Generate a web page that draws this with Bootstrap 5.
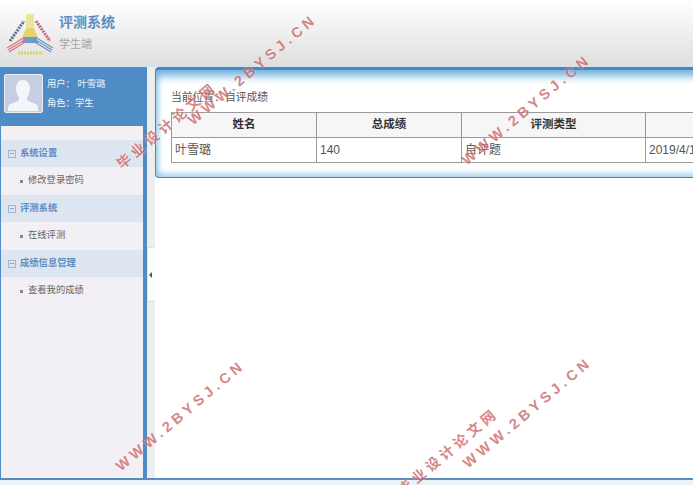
<!DOCTYPE html>
<html lang="zh"><head><meta charset="utf-8">
<link href="https://cdn.jsdelivr.net/npm/bootstrap@5.3.0/dist/css/bootstrap.min.css" rel="stylesheet">
<style>
html,body{height:485px;overflow:hidden}
body{font-family:"Liberation Sans","Noto Sans CJK SC",sans-serif;font-size:10.5px;color:#555;background:#fff;position:relative;width:693px}
.top-head{height:67px;background:linear-gradient(#fff,#dfdfdf);border-bottom:2px solid #cfe3f2;padding-left:3px;gap:2px}
.brand-wrap{margin-bottom:3px}
.brand-title{font-size:14px;font-weight:700;color:#5b8cc2;line-height:18px;margin-top:1px}
.brand-sub{font-size:11px;color:#a5a5a5;margin-top:6px;line-height:14px}
.shell{height:411px}
.side{width:147px;background:#4f8bc4;border-right:4px solid #4f8bc4;flex:none}
.profile{height:59px;padding:7px 0 0 4px;gap:4px;color:#eef4fa}
.avatar{width:39px;height:39px;background:#c5cfe1;border:1.5px solid #e9eef6;border-radius:2px}
.user-lines{line-height:19px;font-size:9.3px;padding-top:1px}
.menu-panel{background:#f2eff5;height:352px;margin-left:1px;padding-top:14px;font-size:9.3px}
.group-row{height:27px;background:#dde5f0;color:#5b8cc2;padding-left:7px;gap:4px;font-weight:700}
.leaf-row{height:28px;padding-left:19px;gap:5px;color:#666}
.leaf-row i{width:3px;height:3px;background:#888;display:block}
.minus{width:8px;height:8px;border:1px solid #9db6d4;position:relative;display:block;flex:none}
.minus::after{content:"";position:absolute;left:1px;right:1px;top:2.5px;height:1px;background:#8aa6c8}
.gutter{width:8px;flex:none;background:#eeeeee;position:relative}
.handle{position:absolute;left:0;top:180px;width:8px;height:55px;background:#fbfbfb;border:1px solid #e2e2e2;border-right:0}
.handle::after{content:"";position:absolute;left:1px;top:24px;border:3px solid transparent;border-right:3px solid #555;border-left:0}
.main-area{flex:1;min-width:0;overflow:hidden}
.result-box{height:111px;border:1px solid #4a86b8;border-top-width:3px;border-right:0;border-radius:4px 0 0 4px;box-shadow:inset 0 9px 9px -3px #6fb1de,inset 0 -6px 7px -3px #9fcde9,inset 5px 0 6px -3px #a9d3ec;padding:20px 0 0 15px;width:560px;background:#fff}
.crumb{font-size:10.8px;line-height:14px;color:#555;margin-bottom:8px;white-space:nowrap}
.grade-table{table-layout:fixed;width:545px;border-collapse:collapse;font-size:12px;margin:0}
.grade-table th,.grade-table td{border:1px solid #9a9a9a;padding:0 3px;height:25px;color:#555;vertical-align:middle}
.grade-table th{background:#f6f6f6;text-align:center;font-weight:700;color:#333;font-size:11.5px}
.foot-strip{height:7px;background:#ebf3fa;border-top:2px solid #5a8dbc}
.mark-text{position:absolute;color:#c9605f;opacity:.75;font-weight:700;white-space:nowrap;transform:rotate(-40deg);transform-origin:left bottom;line-height:16px;pointer-events:none;text-shadow:0 0 2px #fff}
.mark-a{letter-spacing:4px;font-size:14px}
.mark-b{letter-spacing:4px;font-size:14.5px}
</style></head><body>
<header class="top-head d-flex align-items-center">
 <svg width="54" height="54" viewBox="3 0 54 54" class="flex-none">
  <path d="M26 8h8v16h-8z" fill="#ece49a"/>
  <path d="M26 22h8l4 10H22z" fill="#e3d56a"/>
  <path d="M24 31h12l2 6H22z" fill="#6d9bd0"/>
  <g stroke="#d9757f" stroke-width="1.3"><path d="M7 42l18-11M8 44l18-11M9 46l18-11"/></g>
  <g stroke="#6b93bf" stroke-width="1.3"><path d="M53 42L35 31M52 44L34 33M51 46L33 35"/></g>
  <path d="M10 35L24 15" fill="none" stroke="#5f6d8f" stroke-width="3" stroke-dasharray="2 1"/>
  <path d="M36 15L50 35" fill="none" stroke="#c5646f" stroke-width="3" stroke-dasharray="2 1"/>
  <path d="M18 47h25" stroke="#dcd264" stroke-width="3" stroke-dasharray="2 1"/>
 </svg>
 <div class="brand-wrap"><div class="brand-title">评测系统</div><div class="brand-sub">学生端</div></div>
</header>
<div class="shell d-flex">
 <aside class="side">
  <div class="profile d-flex">
   <div class="avatar overflow-hidden"><svg width="36" height="36" viewBox="0 0 36 36"><path d="M18 5c5 0 7 4 7 9 0 4-2 7-3 9v2c2 2 8 3 10 5 1 1 1 4 1 6H3c0-2 0-5 1-6 3-2 8-3 10-5v-2c-1-2-3-5-3-9 0-5 2-9 7-9z" fill="#f4f5f8"/></svg></div>
   <div class="user-lines"><div>用户： 叶雪璐</div><div>角色：学生</div></div>
  </div>
  <nav class="menu-panel">
   <div class="group-row d-flex align-items-center"><span class="minus"></span>系统设置</div>
   <div class="leaf-row d-flex align-items-center"><i></i>修改登录密码</div>
   <div class="group-row d-flex align-items-center"><span class="minus"></span>评测系统</div>
   <div class="leaf-row d-flex align-items-center"><i></i>在线评测</div>
   <div class="group-row d-flex align-items-center"><span class="minus"></span>成绩信息管理</div>
   <div class="leaf-row d-flex align-items-center"><i></i>查看我的成绩</div>
  </nav>
 </aside>
 <div class="gutter"><span class="handle"></span></div>
 <main class="main-area">
  <div class="result-box">
   <div class="crumb">当前位置：自评成绩</div>
   <table class="grade-table">
    <colgroup><col style="width:145px"><col style="width:145px"><col style="width:184px"><col style="width:71px"></colgroup>
    <thead><tr><th>姓名</th><th>总成绩</th><th>评测类型</th><th></th></tr></thead>
    <tbody><tr><td>叶雪璐</td><td>140</td><td>自评题</td><td class="text-nowrap">2019/4/1</td></tr></tbody>
   </table>
  </div>
 </main>
</div>
<div class="foot-strip"></div>
<div class="mark-text mark-a" style="left:124px;top:156px">毕业设计论文网</div>
<div class="mark-text mark-b" style="left:195px;top:112px">WWW.2BYSJ.CN</div>
<div class="mark-text mark-b" style="left:469px;top:152px">WWW.2BYSJ.CN</div>
<div class="mark-text mark-b" style="left:123px;top:458px">WWW.2BYSJ.CN</div>
<div class="mark-text mark-b" style="left:470px;top:455px">WWW.2BYSJ.CN</div>
<div class="mark-text mark-a" style="left:405px;top:482px">毕业设计论文网</div>
</body></html>
